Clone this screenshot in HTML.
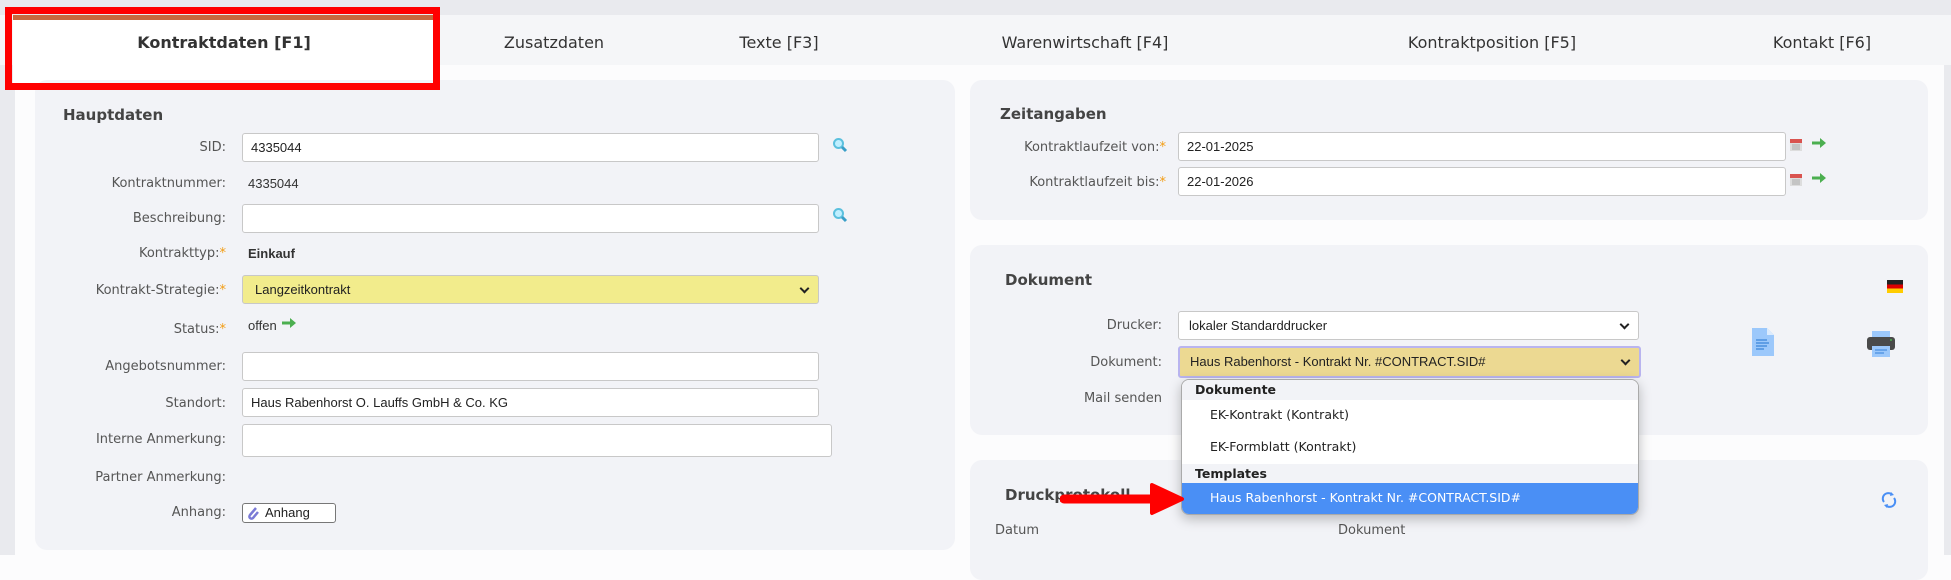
<!DOCTYPE html>
<html><head><meta charset="utf-8"><style>
*{box-sizing:border-box;margin:0;padding:0}
body{width:1951px;height:555px;overflow:hidden;background:#fcfcfd;font-family:"Liberation Sans",sans-serif;color:#333;position:relative;font-size:13px}
.a{position:absolute}
.tabbar{left:0;top:15px;width:1951px;height:50px;background:#f5f6f8}
.tab{position:absolute;top:15px;height:56px;line-height:56px;font-size:16px;font-family:"DejaVu Sans",sans-serif;color:#333;text-align:center;white-space:nowrap}
.panel{position:absolute;background:#f2f3f7;border-radius:12px}
.h{position:absolute;font-weight:bold;font-size:15px;color:#444;font-family:"DejaVu Sans",sans-serif}
.lbl{position:absolute;text-align:right;font-size:13px;color:#555;line-height:16px;font-family:"DejaVu Sans",sans-serif;white-space:nowrap}
.lbl i{color:#f39c12;font-style:normal}
.in{position:absolute;height:29px;background:#fff;border:1px solid #c8c8c8;border-radius:3px;font-size:13px;line-height:27px;padding-left:8px;color:#222}
.val{position:absolute;font-size:13px;color:#333;line-height:16px}
.chev{position:absolute;right:10px;top:9px;width:7px;height:7px;border-right:2px solid #222;border-bottom:2px solid #222;transform:rotate(45deg)}
</style></head><body>
<div class="a" style="left:0;top:0;width:1951px;height:15px;background:#e9eaee"></div>
<div class="a" style="left:0;top:0;width:15px;height:555px;background:#e9eaee"></div>
<div class="a" style="left:1944px;top:0;width:7px;height:555px;background:#e9eaee"></div>
<div class="a tabbar"></div>
<div class="a" style="left:13px;top:15px;width:422px;height:70px;background:#fff"></div>
<div class="a" style="left:13px;top:15px;width:422px;height:5px;background:#c8683e"></div>
<div class="tab" style="left:13px;width:422px;font-weight:bold;color:#333">Kontraktdaten [F1]</div>
<div class="tab" style="left:454px;width:200px">Zusatzdaten</div>
<div class="tab" style="left:679px;width:200px">Texte [F3]</div>
<div class="tab" style="left:960px;width:250px">Warenwirtschaft [F4]</div>
<div class="tab" style="left:1367px;width:250px">Kontraktposition [F5]</div>
<div class="tab" style="left:1722px;width:200px">Kontakt [F6]</div>

<!-- left panel -->
<div class="panel" style="left:35px;top:80px;width:920px;height:470px"></div>
<div class="h" style="left:63px;top:106px">Hauptdaten</div>
<div class="lbl" style="left:20px;width:206px;top:140px">SID:</div>
<div class="in" style="left:242px;top:133px;width:577px">4335044</div>
<svg class="a" style="left:832px;top:137px" width="16" height="16" viewBox="0 0 16 16"><circle cx="6.5" cy="6.5" r="4.5" fill="#bfefff" stroke="#5bc0de" stroke-width="2"/><line x1="10" y1="10" x2="14" y2="14" stroke="#3a9fc8" stroke-width="3"/></svg>
<div class="lbl" style="left:20px;width:206px;top:176px">Kontraktnummer:</div>
<div class="val" style="left:248px;top:176px">4335044</div>
<div class="lbl" style="left:20px;width:206px;top:211px">Beschreibung:</div>
<div class="in" style="left:242px;top:204px;width:577px"></div>
<svg class="a" style="left:832px;top:207px" width="16" height="16" viewBox="0 0 16 16"><circle cx="6.5" cy="6.5" r="4.5" fill="#bfefff" stroke="#5bc0de" stroke-width="2"/><line x1="10" y1="10" x2="14" y2="14" stroke="#3a9fc8" stroke-width="3"/></svg>
<div class="lbl" style="left:20px;width:206px;top:246px">Kontrakttyp:<i>*</i></div>
<div class="val" style="left:248px;top:246px;font-weight:bold">Einkauf</div>
<div class="lbl" style="left:20px;width:206px;top:283px">Kontrakt-Strategie:<i>*</i></div>
<div class="in" style="left:242px;top:275px;width:577px;background:#f2ec8c;padding-left:12px">Langzeitkontrakt<span class="chev"></span></div>
<div class="lbl" style="left:20px;width:206px;top:322px">Status:<i>*</i></div>
<div class="val" style="left:248px;top:318px">offen</div>
<svg class="a" style="left:282px;top:318px" width="14" height="10" viewBox="0 0 14 10"><path d="M0 3.5h8V0l6 5-6 5V6.5H0z" fill="#4caf50"/></svg>
<div class="lbl" style="left:20px;width:206px;top:359px">Angebotsnummer:</div>
<div class="in" style="left:242px;top:352px;width:577px"></div>
<div class="lbl" style="left:20px;width:206px;top:396px">Standort:</div>
<div class="in" style="left:242px;top:388px;width:577px">Haus Rabenhorst O. Lauffs GmbH &amp; Co. KG</div>
<div class="lbl" style="left:20px;width:206px;top:432px">Interne Anmerkung:</div>
<div class="in" style="left:242px;top:424px;width:590px;height:33px"></div>
<div class="lbl" style="left:20px;width:206px;top:470px">Partner Anmerkung:</div>
<div class="lbl" style="left:20px;width:206px;top:505px">Anhang:</div>
<div class="in" style="left:242px;top:503px;width:94px;height:20px;line-height:18px;padding-left:22px;border-color:#777">Anhang</div>
<svg class="a" style="left:247px;top:505px" width="12" height="16" viewBox="0 0 12 16"><path d="M9 3 3 10a2 2 0 0 0 3 3l5-6" stroke="#7a7ad6" stroke-width="2.5" fill="none"/></svg>

<!-- right panel 1 -->
<div class="panel" style="left:970px;top:80px;width:958px;height:140px"></div>
<div class="h" style="left:1000px;top:105px">Zeitangaben</div>
<div class="lbl" style="left:940px;width:226px;top:140px">Kontraktlaufzeit von:<i>*</i></div>
<div class="in" style="left:1178px;top:132px;width:608px">22-01-2025</div>
<div class="lbl" style="left:940px;width:226px;top:175px">Kontraktlaufzeit bis:<i>*</i></div>
<div class="in" style="left:1178px;top:167px;width:608px">22-01-2026</div>
<svg class="a" style="left:1790px;top:139px" width="12" height="12" viewBox="0 0 12 12"><rect x="0" y="0" width="12" height="12" fill="#ddd"/><rect x="0" y="0" width="12" height="4" fill="#d9534f"/><path d="M2 6h8M2 8h8M2 10h8" stroke="#aaa"/></svg>
<svg class="a" style="left:1812px;top:138px" width="14" height="10" viewBox="0 0 14 10"><path d="M0 3.5h8V0l6 5-6 5V6.5H0z" fill="#4caf50"/></svg>
<svg class="a" style="left:1790px;top:174px" width="12" height="12" viewBox="0 0 12 12"><rect x="0" y="0" width="12" height="12" fill="#ddd"/><rect x="0" y="0" width="12" height="4" fill="#d9534f"/><path d="M2 6h8M2 8h8M2 10h8" stroke="#aaa"/></svg>
<svg class="a" style="left:1812px;top:173px" width="14" height="10" viewBox="0 0 14 10"><path d="M0 3.5h8V0l6 5-6 5V6.5H0z" fill="#4caf50"/></svg>

<!-- right panel 2 -->
<div class="panel" style="left:970px;top:245px;width:958px;height:190px"></div>
<div class="h" style="left:1005px;top:271px">Dokument</div>
<div class="a" style="left:1887px;top:280px;width:16px;height:13px;background:linear-gradient(#222 0 33%,#d00 33% 66%,#fc0 66%)"></div>
<div class="lbl" style="left:980px;width:182px;top:318px">Drucker:</div>
<div class="in" style="left:1178px;top:311px;width:461px;padding-left:10px">lokaler Standarddrucker<span class="chev"></span></div>
<div class="lbl" style="left:980px;width:182px;top:355px">Dokument:</div>
<div class="in" style="left:1178px;top:346px;width:463px;height:32px;line-height:28px;background:#ecd992;border:2px solid #b9b4ef;padding-left:10px">Haus Rabenhorst - Kontrakt Nr. #CONTRACT.SID#<span class="chev"></span></div>
<div class="lbl" style="left:980px;width:182px;top:391px">Mail senden</div>
<svg class="a" style="left:1752px;top:328px" width="22" height="28" viewBox="0 0 22 28"><path d="M0 0h15l7 7v21H0z" fill="#9cc8fb"/><path d="M15 0v7h7z" fill="#dcebfd"/><path d="M4 12h11M4 15h13M4 18h11M4 21h8" stroke="#4a8fe0" stroke-width="1.5"/></svg>
<svg class="a" style="left:1867px;top:331px" width="28" height="26" viewBox="0 0 28 26"><rect x="5" y="0" width="18" height="7" fill="#9cc8fb"/><rect x="0" y="6" width="28" height="13" rx="3" fill="#4a4a4a"/><rect x="5" y="15" width="18" height="11" fill="#9cc8fb"/><path d="M8 19h12M8 22h9" stroke="#4a8fe0" stroke-width="1.3"/><circle cx="24" cy="9" r="1" fill="#4caf50"/></svg>

<!-- right panel 3 -->
<div class="panel" style="left:970px;top:460px;width:958px;height:120px"></div>
<div class="h" style="left:1005px;top:486px">Druckprotokoll</div>
<div class="lbl" style="left:995px;top:523px;text-align:left">Datum</div>
<div class="lbl" style="left:1338px;top:523px;text-align:left">Dokument</div>
<svg class="a" style="left:1881px;top:492px" width="16" height="16" viewBox="0 0 16 16"><path d="M3 10a5.5 5.5 0 0 1 8-7.5M13 6a5.5 5.5 0 0 1-8 7.5" stroke="#4a8ff5" stroke-width="2" fill="none"/><path d="M10 0l3 3-4 1zM6 16l-3-3 4-1z" fill="#4a8ff5"/></svg>

<!-- dropdown -->
<div class="a" style="left:1181px;top:379px;width:458px;height:136px;background:#fff;border:1px solid #aaa;border-radius:8px;box-shadow:0 4px 12px rgba(0,0,0,.25);overflow:hidden;font-family:'DejaVu Sans',sans-serif;font-size:12.5px">
<div style="height:20px;background:#f2f3f7;font-weight:bold;padding-left:13px;line-height:20px;color:#222">Dokumente</div>
<div style="height:32px;line-height:30px;padding-left:28px;color:#222">EK-Kontrakt (Kontrakt)</div>
<div style="height:32px;line-height:30px;padding-left:28px;color:#222">EK-Formblatt (Kontrakt)</div>
<div style="height:19px;background:#f2f3f7;font-weight:bold;padding-left:13px;line-height:20px;color:#222">Templates</div>
<div style="height:31px;background:#4a8ff5;color:#fff;line-height:29px;padding-left:28px">Haus Rabenhorst - Kontrakt Nr. #CONTRACT.SID#</div>
</div>

<!-- red annotations -->
<div class="a" style="left:5px;top:7px;width:435px;height:83px;border:7px solid #f00"></div>
<svg class="a" style="left:1060px;top:482px" width="125" height="34" viewBox="0 0 125 34"><path d="M4 17H100" stroke="#f00" stroke-width="9" stroke-linecap="round"/><path d="M92 3l30 14-30 14z" fill="#f00" stroke="#f00" stroke-width="4" stroke-linejoin="round"/></svg>
</body></html>
